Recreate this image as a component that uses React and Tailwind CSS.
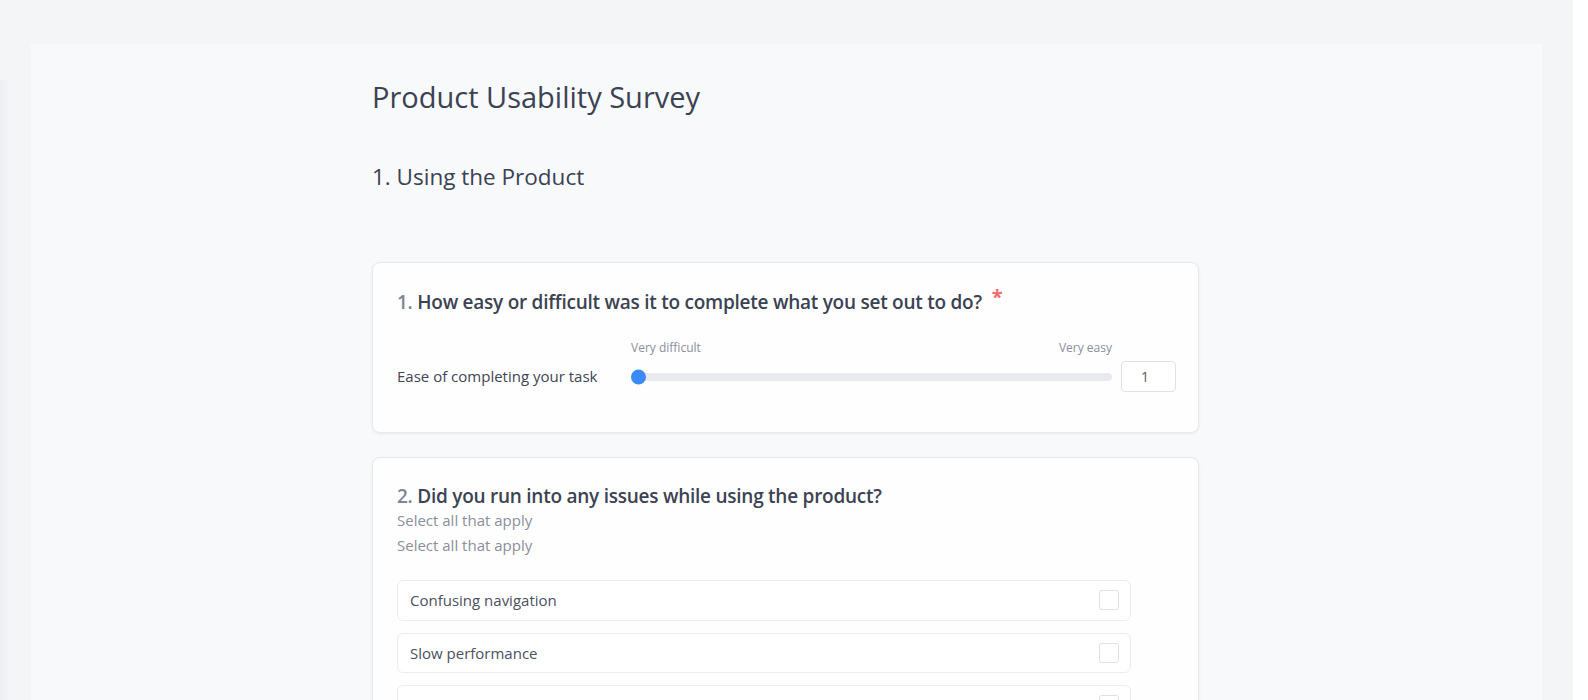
import React from "react";

const font = { fontFamily: '"Open Sans", "Noto Sans", sans-serif' };

function Checkbox() {
  return <div className="w-[20px] h-[20px] rounded-[3px] border border-[#dfe1e6] bg-white shrink-0" />;
}

function Option({ label }) {
  return (
    <div className="w-[734px] h-[40.5px] flex items-center justify-between pl-[12px] pr-[11px] rounded-[6px] border border-[#ebecef] bg-white">
      <span className="text-[15px] text-[#4b5160]">{label}</span>
      <Checkbox />
    </div>
  );
}

export default function App() {
  return (
    <div className="h-[700px] overflow-hidden flex bg-white" style={font}>
      <div className="flex-1 flex bg-[#f4f5f7] overflow-hidden">
        <div className="w-[8px] mt-[80px] bg-gradient-to-r from-[#eceef1] to-[#f2f3f5] shrink-0" />
        <div className="ml-[23px] mt-[44px] w-[1511px] shrink-0 bg-[#f8f9fb] pt-[35px] pl-[341px]">
          <div className="w-[827px]">
            <h1 className="text-[29px] leading-[36px] text-[#3b4252] font-medium">Product Usability Survey</h1>
            <h2 className="mt-[47px] text-[22.5px] leading-[30px] text-[#3b4252] font-medium">1. Using the Product</h2>

            <div className="mt-[70px] rounded-[8px] border border-[#e8e9ed] bg-[#fefefe] shadow-[0_1px_3px_rgba(0,0,0,0.06)] pl-[24px] pr-[22px] pt-[25px] pb-[40px]">
              <div className="text-[19px] leading-[28px] font-semibold tracking-[-0.25px] text-[#3b4252]">
                <span className="text-[#80858f]">1.</span> How easy or difficult was it to complete what you set out to do?
                <span className="text-[20px] font-bold text-[#f26b6b] ml-[10px] relative top-[-5px]">*</span>
              </div>
              <div className="mt-[24px] flex items-end">
                <div className="w-[234px] text-[15px] leading-[31px] text-[#3f4553] shrink-0">Ease of completing your task</div>
                <div className="flex-1 flex flex-col">
                  <div className="flex justify-between text-[12px] leading-[16px] text-[#8a8f9a] mb-[5px]">
                    <span>Very difficult</span>
                    <span>Very easy</span>
                  </div>
                  <div className="h-[31px] flex items-center">
                    <div className="relative h-[8px] w-full rounded-full bg-[#e9eaef]">
                      <div className="absolute left-0 top-1/2 -translate-y-1/2 w-[15px] h-[15px] rounded-full bg-[#3a8bf7]" />
                    </div>
                  </div>
                </div>
                <div className="ml-[9px] w-[55px] h-[31px] rounded-[4px] border border-[#dfe1e6] bg-white flex items-center pl-[19px] text-[14px] text-[#555b68] shrink-0">1</div>
              </div>
            </div>

            <div className="mt-[24px] rounded-[8px] border border-[#e8e9ed] bg-[#fefefe] shadow-[0_1px_3px_rgba(0,0,0,0.06)] px-[24px] pt-[24px] pb-[40px]">
              <div className="text-[19px] leading-[28px] font-semibold tracking-[-0.25px] text-[#3b4252]">
                <span className="text-[#80858f]">2.</span> Did you run into any issues while using the product?
              </div>
              <div className="text-[15px] leading-[24px] -mt-[2px] text-[#8a8f9a]">Select all that apply</div>
              <div className="text-[15px] leading-[26px] text-[#8a8f9a]">Select all that apply</div>
              <div className="mt-[22px] flex flex-col gap-[12px]">
                <Option label="Confusing navigation" />
                <Option label="Slow performance" />
                <Option label="Missing features" />
                <Option label="Unclear instructions" />
              </div>
            </div>
          </div>
        </div>
      </div>
      <div className="w-[15px] shrink-0 bg-white" />
    </div>
  );
}
